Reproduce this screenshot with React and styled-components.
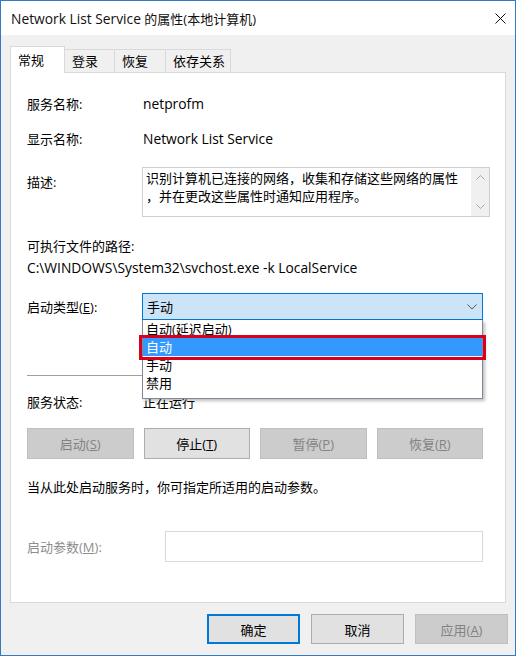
import React from "react"
import styled, { createGlobalStyle } from "styled-components"

const GlobalStyle = createGlobalStyle`
  body {
    margin: 0;
    background: #fff;
    font-family: "Open Sans", "Noto Sans CJK SC", sans-serif;
    font-size: 13px;
    color: #000;
  }
`

const startTypes = ["自动(延迟启动)", "自动", "手动", "禁用"]

const App = () => {
  return (
    <>
      <GlobalStyle />
      <Window>
        <TitleBar>
          <Title>
            <Latin>Network List Service</Latin> 的属性(本地计算机)
          </Title>
          <CloseBox>
            <svg width="11" height="11" viewBox="0 0 11 11">
              <path d="M0.5 0.5 L10.5 10.5 M10.5 0.5 L0.5 10.5" stroke="#111" strokeWidth="1" fill="none" />
            </svg>
          </CloseBox>
        </TitleBar>
        <Content>
          <TabStrip>
            <Tab $active $w={55}>常规</Tab>
            <Tab $w={51}>登录</Tab>
            <Tab $w={52}>恢复</Tab>
            <Tab $w={66}>依存关系</Tab>
          </TabStrip>
          <Panel>
            <InfoRow $top={21}>
              <Label>服务名称:</Label>
              <Value>
                <Latin>netprofm</Latin>
              </Value>
            </InfoRow>
            <InfoRow $top={15}>
              <Label>显示名称:</Label>
              <Value>
                <Latin>Network List Service</Latin>
              </Value>
            </InfoRow>
            <InfoRow $top={18}>
              <Label $pad={5}>描述:</Label>
              <DescBox>
                <DescText>
                  <Line>识别计算机已连接的网络，收集和存储这些网络的属性</Line>
                  <Line>，并在更改这些属性时通知应用程序。</Line>
                </DescText>
                <ScrollBar>
                  <svg width="9" height="5" viewBox="0 0 9 5">
                    <path d="M0.5 4.5 L4.5 0.5 L8.5 4.5" stroke="#a6a6a6" fill="none" />
                  </svg>
                  <svg width="9" height="5" viewBox="0 0 9 5">
                    <path d="M0.5 0.5 L4.5 4.5 L8.5 0.5" stroke="#a6a6a6" fill="none" />
                  </svg>
                </ScrollBar>
              </DescBox>
            </InfoRow>
            <TextLine $top={19}>可执行文件的路径:</TextLine>
            <TextLine $top={2}>
              <Latin>C:\WINDOWS\System32\svchost.exe -k LocalService</Latin>
            </TextLine>
            <InfoRow $top={15} $center>
              <Label>
                启动类型(<u>E</u>):
              </Label>
              <ComboWrap>
                <Combo>
                  <span>手动</span>
                  <svg width="10" height="6" viewBox="0 0 10 6">
                    <path d="M0.5 0.5 L5 5 L9.5 0.5" stroke="#555" fill="none" />
                  </svg>
                </Combo>
                <DropList>
                  {startTypes.map((t, i) => (
                    <DropItem key={t} $selected={i === 1}>
                      {t}
                    </DropItem>
                  ))}
                  <RedMark />
                </DropList>
              </ComboWrap>
            </InfoRow>
            <Separator />
            <InfoRow $top={16}>
              <Label>服务状态:</Label>
              <Value>正在运行</Value>
            </InfoRow>
            <ButtonRow>
              <ActionButton disabled>
                启动(<u>S</u>)
              </ActionButton>
              <ActionButton>
                停止(<u>T</u>)
              </ActionButton>
              <ActionButton disabled>
                暂停(<u>P</u>)
              </ActionButton>
              <ActionButton disabled>
                恢复(<u>R</u>)
              </ActionButton>
            </ButtonRow>
            <TextLine $top={18}>当从此处启动服务时，你可指定所适用的启动参数。</TextLine>
            <ParamRow>
              <Label $muted>
                启动参数(<u>M</u>):
              </Label>
              <ParamInput />
            </ParamRow>
          </Panel>
          <Footer>
            <DialogButton $default>确定</DialogButton>
            <DialogButton>取消</DialogButton>
            <DialogButton disabled>
              应用(<u>A</u>)
            </DialogButton>
          </Footer>
        </Content>
      </Window>
    </>
  )
}

export default App

const Window = styled.div`
  width: 516px;
  height: 656px;
  box-sizing: border-box;
  border: 1px solid #2f7cc4;
  background: #f0f0f0;
  display: flex;
  flex-direction: column;
`

const TitleBar = styled.div`
  height: 34px;
  flex-shrink: 0;
  background: #fff;
  display: flex;
  align-items: center;
  justify-content: space-between;
  padding-left: 10px;
`

const Title = styled.div`
  font-size: 13px;
  color: #111;
  white-space: nowrap;
`

// Segoe UI runs wider than Open Sans, so Latin runs get a touch more size
const Latin = styled.span`
  font-size: 13.8px;
`

const CloseBox = styled.div`
  width: 30px;
  height: 34px;
  display: flex;
  align-items: center;
  justify-content: center;
`

const Content = styled.div`
  flex: 1;
  display: flex;
  flex-direction: column;
  padding: 0 9px;
`

const TabStrip = styled.div`
  height: 26px;
  margin-top: 11px;
  display: flex;
  align-items: flex-end;
`

const Tab = styled.div`
  width: ${({ $w }) => $w}px;
  box-sizing: border-box;
  height: ${({ $active }) => ($active ? "27px" : "23px")};
  margin-bottom: ${({ $active }) => ($active ? "-1px" : "0")};
  margin-left: -1px;
  &:first-child {
    margin-left: 0;
  }
  padding-left: 7px;
  padding-top: ${({ $active }) => ($active ? "3px" : "1px")};
  line-height: 20px;
  border: 1px solid #d9d9d9;
  border-bottom: none;
  background: ${({ $active }) => ($active ? "#fff" : "#f0f0f0")};
  position: relative;
  z-index: ${({ $active }) => ($active ? 1 : 0)};
  white-space: nowrap;
`

const Panel = styled.div`
  height: 531px;
  box-sizing: border-box;
  border: 1px solid #d9d9d9;
  background: #fff;
  padding: 0 22px 0 16px;
  display: flex;
  flex-direction: column;
`

const InfoRow = styled.div`
  display: grid;
  grid-template-columns: 116px 1fr;
  align-items: ${({ $center }) => ($center ? "center" : "start")};
  margin-top: ${({ $top }) => $top}px;
  line-height: 20px;
`

const Label = styled.div`
  padding-top: ${({ $pad }) => $pad || 0}px;
  color: ${({ $muted }) => ($muted ? "#8d8d8d" : "#000")};
  white-space: nowrap;
`

const Value = styled.div`
  white-space: nowrap;
`

const TextLine = styled.div`
  margin-top: ${({ $top }) => $top}px;
  line-height: 20px;
  white-space: nowrap;
`

const DescBox = styled.div`
  margin-left: -1px;
  margin-right: -7px;
  height: 50px;
  box-sizing: border-box;
  border: 1px solid #cfcfcf;
  display: flex;
`

const DescText = styled.div`
  flex: 1;
  padding: 1px 0 0 3px;
  line-height: 18px;
`

const Line = styled.div`
  white-space: nowrap;
`

const ScrollBar = styled.div`
  width: 18px;
  background: #f0f0f0;
  display: flex;
  flex-direction: column;
  align-items: center;
  justify-content: space-between;
  padding: 7px 0;
  box-sizing: border-box;
`

const ComboWrap = styled.div`
  position: relative;
  margin-left: -1px;
`

const Combo = styled.div`
  height: 27px;
  box-sizing: border-box;
  border: 1px solid #0078d7;
  background: #cce4f7;
  display: flex;
  align-items: center;
  justify-content: space-between;
  padding: 0 5px 0 4px;
`

const DropList = styled.div`
  position: absolute;
  top: 100%;
  left: 0;
  right: 0;
  z-index: 5;
  background: #fff;
  border: 1px solid #7f8a96;
  border-top: none;
  padding-bottom: 6px;
  box-shadow: 2px 2px 3px rgba(0, 0, 0, 0.25);
`

const DropItem = styled.div`
  height: 18px;
  line-height: 18px;
  padding-left: 3px;
  background: ${({ $selected }) => ($selected ? "#3399ff" : "transparent")};
  color: ${({ $selected }) => ($selected ? "#fff" : "#000")};
  white-space: nowrap;
`

const RedMark = styled.div`
  position: absolute;
  left: -4px;
  right: -4px;
  top: 15px;
  height: 25px;
  box-sizing: border-box;
  border: 3px solid #d8001c;
`

const Separator = styled.div`
  height: 1px;
  background: #a0a0a0;
  margin-top: 55px;
`

const ButtonRow = styled.div`
  display: grid;
  grid-template-columns: repeat(4, 1fr);
  gap: 10px;
  margin-top: 16px;
`

const ActionButton = styled.button`
  height: 31px;
  box-sizing: border-box;
  font: inherit;
  border: 1px solid ${({ disabled }) => (disabled ? "#bfbfbf" : "#adadad")};
  background: ${({ disabled }) => (disabled ? "#cccccc" : "#e1e1e1")};
  color: ${({ disabled }) => (disabled ? "#838383" : "#000")};
  padding: 0;
`

const ParamRow = styled.div`
  display: grid;
  grid-template-columns: 138px 1fr;
  align-items: center;
  margin-top: 34px;
`

const ParamInput = styled.div`
  height: 31px;
  box-sizing: border-box;
  border: 1px solid #d9d9d9;
  background: #fff;
`

const Footer = styled.div`
  display: flex;
  justify-content: flex-end;
  gap: 11px;
  margin-top: 11px;
  margin-right: -2px;
`

const DialogButton = styled.button`
  width: 93px;
  height: 30px;
  box-sizing: border-box;
  font: inherit;
  padding: 0;
  border: ${({ $default, disabled }) =>
    $default ? "2px solid #0078d7" : disabled ? "1px solid #bfbfbf" : "1px solid #adadad"};
  background: ${({ disabled }) => (disabled ? "#cccccc" : "#e1e1e1")};
  color: ${({ disabled }) => (disabled ? "#838383" : "#000")};
`
